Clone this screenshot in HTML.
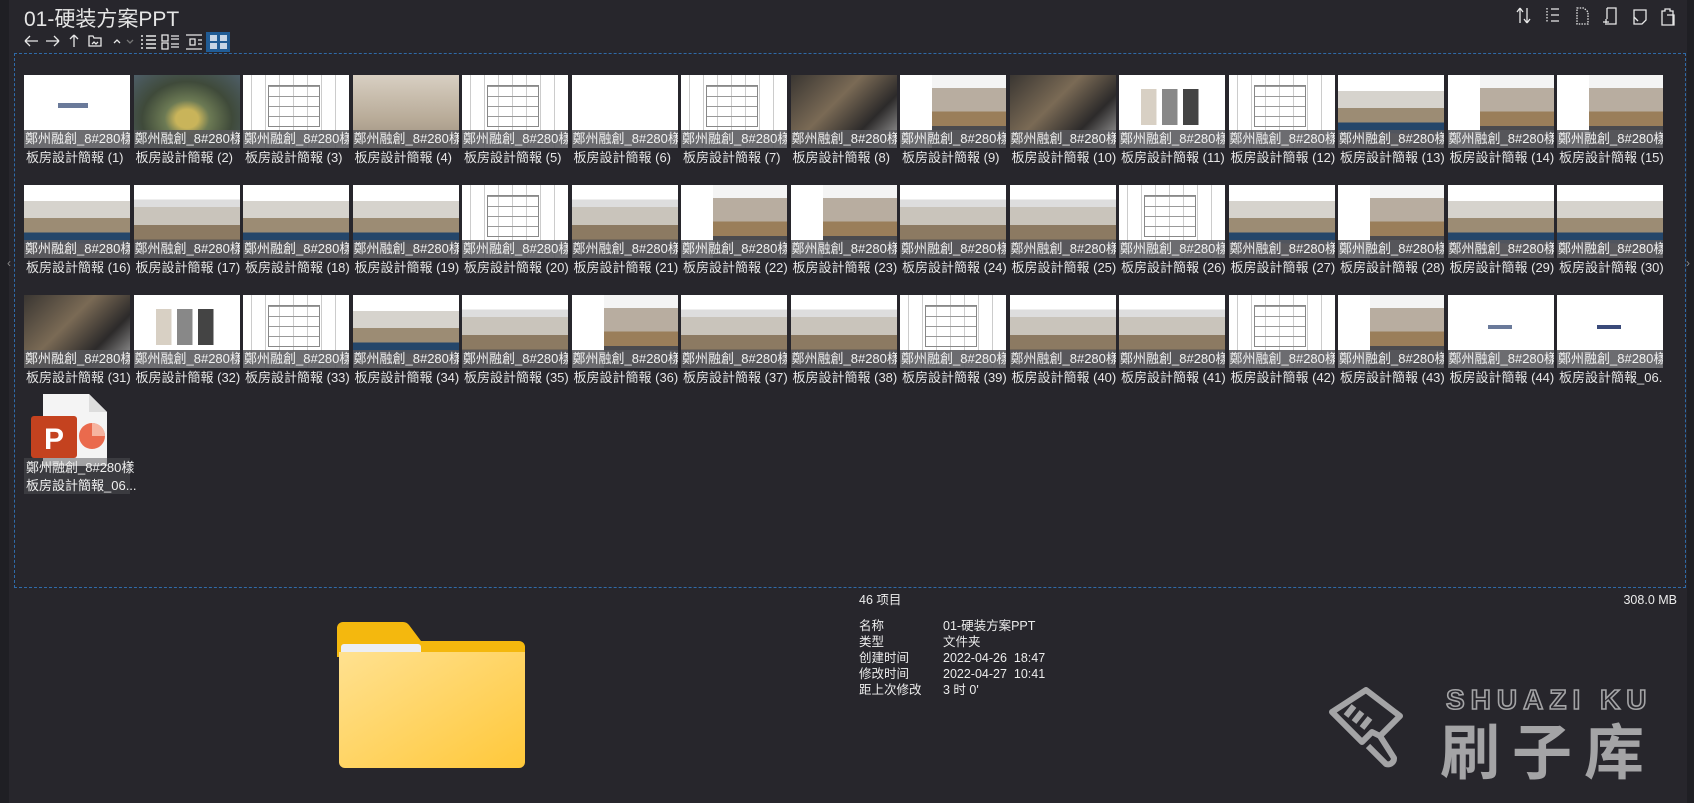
<!DOCTYPE html>
<html><head><meta charset="utf-8">
<style>
*{margin:0;padding:0;box-sizing:border-box}
body{width:1694px;height:803px;background:#27262c;font-family:"Liberation Sans","Noto Sans CJK SC",sans-serif;color:#e8e8e8;position:relative;overflow:hidden}
.abs{position:absolute}
.title{left:24px;top:3px;font-size:21px;color:#e6e6e6}
.frame{left:14px;top:53px;width:1672px;height:535px;border:1px dashed #2f6aa8}
.grid{left:24px;top:75px;display:grid;grid-template-columns:repeat(15,106px);column-gap:3.5px;row-gap:0;grid-auto-rows:110px}
.t{width:106px;position:relative}
.th{width:106px;height:73px;position:relative;overflow:hidden}
.l1{position:absolute;left:0;top:55px;width:106px;height:18px;background:rgba(88,88,92,.88);font-size:13px;line-height:18px;white-space:nowrap;overflow:hidden;padding-left:1px;color:#f2f2f2}
.l2{font-size:13px;line-height:19px;white-space:nowrap;overflow:hidden;width:106px;padding-left:2px;color:#e6e6e6}
.w{background:#fff}
.pl{background:repeating-linear-gradient(90deg,#fff 0 8px,#ccc 8px 9px,#fff 9px 14px),#fff}
.pl::after{content:"";position:absolute;left:25px;top:10px;width:50px;height:40px;border:1px solid #888;background:repeating-linear-gradient(0deg,transparent 0 9px,#999 9px 10px)}
.in{background:linear-gradient(180deg,#fff 0 20%,#ddd 20% 30%,#c9c4bb 30% 55%,#8c7a62 55% 75%,#5d5650 75%)}
.in2{background:linear-gradient(90deg,#fff 0 30%,transparent 30%),linear-gradient(180deg,#f4f4f4 0 18%,#b8ada0 18% 50%,#9a7e5a 50% 70%,#4a4a4e 70%)}
.dk{background:linear-gradient(135deg,#3a3632,#7a6a55 40%,#2c2a2a 70%,#aaa)}
.ae{background:radial-gradient(ellipse at 50% 60%,#c9b45a 0 15%,#6c7a54 30%,#3f4a3a 60%,#4e5e68)}
.fg{background:linear-gradient(180deg,#d8cfc2,#b8ab98 60%,#9a8d7e)}
.sw{background:#fff}
.sw::after{content:"";position:absolute;left:22px;top:14px;width:70px;height:36px;background:linear-gradient(90deg,#d8d0c4 0 22%,#fff 22% 30%,#888 30% 52%,#fff 52% 60%,#444 60% 82%,#fff 82%)}
.bl{background:linear-gradient(180deg,#fff 0 22%,#d6d3cd 22% 45%,#9c8c74 45% 65%,#24466a 65% 80%,#6a6460 80%)}
.info{font-size:12.5px;line-height:16px;color:#ececec}
</style></head><body>
<div class="abs" style="left:0;top:0;width:9px;height:803px;background:#1f1f24"></div>
<div class="abs" style="left:1687px;top:0;width:7px;height:803px;background:#1f1f24"></div>
<div class="abs" style="left:7px;top:256px;font-size:12px;color:#888">‹</div>
<div class="abs" style="left:1686px;top:256px;font-size:12px;color:#888">›</div>
<div class="abs title">01-硬装方案PPT</div>
<svg class="abs" style="left:22px;top:32px" width="240" height="20" viewBox="0 0 240 20" fill="none" stroke="#e8e8e8" stroke-width="1.3">
<path d="M3 9h13M3 9l5-5M3 9l5 5"/>
<path d="M24 9h13M37 9l-5-5M37 9l-5 5"/>
<path d="M52 3v12M52 3l-4 4M52 3l4 4"/>
<path d="M67 4h4l1 2h7v8h-12z"/><path d="M70 12l2-2 2 2 2-2"/>
<path d="M92 11l3-3 3 3"/><path stroke="#777" d="M105 8l3 3 3-3"/>
<path d="M119 4h2M119 8h2M119 12h2M119 16h2M124 4h10M124 8h10M124 12h10M124 16h10" stroke-width="1.6"/>
<path d="M140 3h6v6h-6zM140 11h6v6h-6zM149 4h8M149 7h8M149 12h8M149 15h8"/>
<path d="M164 3h16M164 17h16M168 7h5v6h-5zM176 8h4M176 12h4"/>
<rect x="184" y="-1" width="24" height="22" fill="#215c95" stroke="none"/>
<path d="M188 3h7v6h-7zM198 3h7v6h-7zM188 11h7v6h-7zM198 11h7v6h-7z" fill="#c8d6e6" stroke="none"/>
</svg>
<svg class="abs" style="left:1515px;top:5px" width="170" height="22" viewBox="0 0 170 22" fill="none" stroke="#e8e8e8" stroke-width="1.3">
<path d="M5 3v15M5 3l-3 4M5 3l3 4M12 18V3M12 18l-3-4M12 18l3-4"/>
<path d="M32 3v15" stroke-dasharray="1.5 1.5"/><path d="M36 4h8M36 10h8M36 16h8"/>
<path d="M62 3h7l4 4v12h-11z" stroke-dasharray="1.5 1.2"/>
<path d="M92 3h9v16h-9M92 14v-11M88 17h6M91 14v6"/>
<path d="M119 5h12v10l-4 4h-8z"/><path d="M119 12l4 4"/>
<path d="M147 6h3v-2h5v2h3v14h-11zM152 10h7v10h-7"/>
</svg>
<div class="abs frame"></div>

<div class="abs grid">
<div class="t"><div class="th w"><div class="abs" style="left:34px;top:28px;width:30px;height:5px;background:#6a7a9a"></div><div class="l1">鄭州融創_8#280樣</div></div><div class="l2">板房設計簡報 (1)</div></div>
<div class="t"><div class="th ae"><div class="l1">鄭州融創_8#280樣</div></div><div class="l2">板房設計簡報 (2)</div></div>
<div class="t"><div class="th pl"><div class="l1">鄭州融創_8#280樣</div></div><div class="l2">板房設計簡報 (3)</div></div>
<div class="t"><div class="th fg"><div class="l1">鄭州融創_8#280樣</div></div><div class="l2">板房設計簡報 (4)</div></div>
<div class="t"><div class="th pl"><div class="l1">鄭州融創_8#280樣</div></div><div class="l2">板房設計簡報 (5)</div></div>
<div class="t"><div class="th w"><div class="l1">鄭州融創_8#280樣</div></div><div class="l2">板房設計簡報 (6)</div></div>
<div class="t"><div class="th pl"><div class="l1">鄭州融創_8#280樣</div></div><div class="l2">板房設計簡報 (7)</div></div>
<div class="t"><div class="th dk"><div class="l1">鄭州融創_8#280樣</div></div><div class="l2">板房設計簡報 (8)</div></div>
<div class="t"><div class="th in2"><div class="l1">鄭州融創_8#280樣</div></div><div class="l2">板房設計簡報 (9)</div></div>
<div class="t"><div class="th dk"><div class="l1">鄭州融創_8#280樣</div></div><div class="l2">板房設計簡報 (10)</div></div>
<div class="t"><div class="th sw"><div class="l1">鄭州融創_8#280樣</div></div><div class="l2">板房設計簡報 (11)</div></div>
<div class="t"><div class="th pl"><div class="l1">鄭州融創_8#280樣</div></div><div class="l2">板房設計簡報 (12)</div></div>
<div class="t"><div class="th bl"><div class="l1">鄭州融創_8#280樣</div></div><div class="l2">板房設計簡報 (13)</div></div>
<div class="t"><div class="th in2"><div class="l1">鄭州融創_8#280樣</div></div><div class="l2">板房設計簡報 (14)</div></div>
<div class="t"><div class="th in2"><div class="l1">鄭州融創_8#280樣</div></div><div class="l2">板房設計簡報 (15)</div></div>

<div class="t"><div class="th bl"><div class="l1">鄭州融創_8#280樣</div></div><div class="l2">板房設計簡報 (16)</div></div>
<div class="t"><div class="th in"><div class="l1">鄭州融創_8#280樣</div></div><div class="l2">板房設計簡報 (17)</div></div>
<div class="t"><div class="th bl"><div class="l1">鄭州融創_8#280樣</div></div><div class="l2">板房設計簡報 (18)</div></div>
<div class="t"><div class="th bl"><div class="l1">鄭州融創_8#280樣</div></div><div class="l2">板房設計簡報 (19)</div></div>
<div class="t"><div class="th pl"><div class="l1">鄭州融創_8#280樣</div></div><div class="l2">板房設計簡報 (20)</div></div>
<div class="t"><div class="th in"><div class="l1">鄭州融創_8#280樣</div></div><div class="l2">板房設計簡報 (21)</div></div>
<div class="t"><div class="th in2"><div class="l1">鄭州融創_8#280樣</div></div><div class="l2">板房設計簡報 (22)</div></div>
<div class="t"><div class="th in2"><div class="l1">鄭州融創_8#280樣</div></div><div class="l2">板房設計簡報 (23)</div></div>
<div class="t"><div class="th in"><div class="l1">鄭州融創_8#280樣</div></div><div class="l2">板房設計簡報 (24)</div></div>
<div class="t"><div class="th in"><div class="l1">鄭州融創_8#280樣</div></div><div class="l2">板房設計簡報 (25)</div></div>
<div class="t"><div class="th pl"><div class="l1">鄭州融創_8#280樣</div></div><div class="l2">板房設計簡報 (26)</div></div>
<div class="t"><div class="th bl"><div class="l1">鄭州融創_8#280樣</div></div><div class="l2">板房設計簡報 (27)</div></div>
<div class="t"><div class="th in2"><div class="l1">鄭州融創_8#280樣</div></div><div class="l2">板房設計簡報 (28)</div></div>
<div class="t"><div class="th bl"><div class="l1">鄭州融創_8#280樣</div></div><div class="l2">板房設計簡報 (29)</div></div>
<div class="t"><div class="th bl"><div class="l1">鄭州融創_8#280樣</div></div><div class="l2">板房設計簡報 (30)</div></div>

<div class="t"><div class="th dk"><div class="l1">鄭州融創_8#280樣</div></div><div class="l2">板房設計簡報 (31)</div></div>
<div class="t"><div class="th sw"><div class="l1">鄭州融創_8#280樣</div></div><div class="l2">板房設計簡報 (32)</div></div>
<div class="t"><div class="th pl"><div class="l1">鄭州融創_8#280樣</div></div><div class="l2">板房設計簡報 (33)</div></div>
<div class="t"><div class="th bl"><div class="l1">鄭州融創_8#280樣</div></div><div class="l2">板房設計簡報 (34)</div></div>
<div class="t"><div class="th in"><div class="l1">鄭州融創_8#280樣</div></div><div class="l2">板房設計簡報 (35)</div></div>
<div class="t"><div class="th in2"><div class="l1">鄭州融創_8#280樣</div></div><div class="l2">板房設計簡報 (36)</div></div>
<div class="t"><div class="th in"><div class="l1">鄭州融創_8#280樣</div></div><div class="l2">板房設計簡報 (37)</div></div>
<div class="t"><div class="th in"><div class="l1">鄭州融創_8#280樣</div></div><div class="l2">板房設計簡報 (38)</div></div>
<div class="t"><div class="th pl"><div class="l1">鄭州融創_8#280樣</div></div><div class="l2">板房設計簡報 (39)</div></div>
<div class="t"><div class="th in"><div class="l1">鄭州融創_8#280樣</div></div><div class="l2">板房設計簡報 (40)</div></div>
<div class="t"><div class="th in"><div class="l1">鄭州融創_8#280樣</div></div><div class="l2">板房設計簡報 (41)</div></div>
<div class="t"><div class="th pl"><div class="l1">鄭州融創_8#280樣</div></div><div class="l2">板房設計簡報 (42)</div></div>
<div class="t"><div class="th in2"><div class="l1">鄭州融創_8#280樣</div></div><div class="l2">板房設計簡報 (43)</div></div>
<div class="t"><div class="th w"><div class="abs" style="left:40px;top:30px;width:24px;height:4px;background:#6a7a9a"></div><div class="l1">鄭州融創_8#280樣</div></div><div class="l2">板房設計簡報 (44)</div></div>
<div class="t"><div class="th w"><div class="abs" style="left:40px;top:30px;width:24px;height:4px;background:#3a4a7a"></div><div class="l1">鄭州融創_8#280樣</div></div><div class="l2">板房設計簡報_06...</div></div>
</div>

<svg class="abs" style="left:30px;top:394px" width="82" height="72" viewBox="0 0 82 72">
<path d="M13 0h46l18 18v54h-64z" fill="#f4f4f4"/>
<path d="M59 0v18h18z" fill="#ddd"/>
<circle cx="62" cy="42" r="13" fill="#ea6a4d"/>
<path d="M62 29a13 13 0 0 1 13 13h-13z" fill="#f6b4a0"/>
<rect x="1" y="22" width="46" height="42" rx="3" fill="#c4421f"/>
<text x="14" y="55" font-family="Liberation Sans" font-weight="bold" font-size="30" fill="#fff">P</text>
</svg>
<div class="abs" style="left:24px;top:458px;width:106px;height:36px;background:rgba(80,80,84,.5)"></div>
<div class="abs" style="left:26px;top:459px;font-size:13px;line-height:18px;color:#f0f0f0;white-space:nowrap">鄭州融創_8#280樣<br>板房設計簡報_06...</div>

<svg class="abs" style="left:337px;top:620px" width="190" height="150" viewBox="0 0 190 150">
<defs><linearGradient id="fg" x1="0" y1="0" x2="1" y2="1"><stop offset="0" stop-color="#ffe190"/><stop offset="1" stop-color="#ffc83a"/></linearGradient></defs>
<path d="M0 8a6 6 0 0 1 6-6h60a8 8 0 0 1 6 3l12 16h98a6 6 0 0 1 6 6v10h-188z" fill="#f4b80e"/>
<rect x="4" y="24" width="80" height="14" rx="3" fill="#eceef4"/>
<path d="M2 32h186v110a6 6 0 0 1-6 6h-174a6 6 0 0 1-6-6z" fill="url(#fg)"/>
</svg>

<div class="abs info" style="left:859px;top:592px">46 项目</div>
<div class="abs info" style="left:1620px;top:592px;width:57px;text-align:right">308.0 MB</div>
<div class="abs info" style="left:859px;top:618px">名称<br>类型<br>创建时间<br>修改时间<br>距上次修改</div>
<div class="abs info" style="left:943px;top:618px;white-space:pre">01-硬装方案PPT
文件夹
2022-04-26  18:47
2022-04-27  10:41
3 时 0'</div>

<svg class="abs" style="left:1326px;top:686px" width="90" height="90" viewBox="0 0 90 90" fill="none" stroke="#a4a4a6" stroke-width="6" stroke-linejoin="round">
<path d="M40 4l34 26-20 20-8-4-10 10-30-30z"/>
<path d="M20 30l8-10M28 36l8-10M36 42l8-10"/>
<path d="M54 50l14 22a6 6 0 0 1-8 6l-18-18"/>
</svg>
<div class="abs" style="left:1446px;top:684px;font-size:28px;font-weight:bold;letter-spacing:6px;color:#27262c;-webkit-text-stroke:1.6px #a4a4a6;font-family:'Liberation Sans',sans-serif">SHUAZI KU</div>
<div class="abs" style="left:1440px;top:714px;font-size:60px;line-height:70px;letter-spacing:12px;color:#a4a4a6;font-family:'Noto Sans CJK SC',sans-serif;font-weight:bold">刷子库</div>
</body></html>
